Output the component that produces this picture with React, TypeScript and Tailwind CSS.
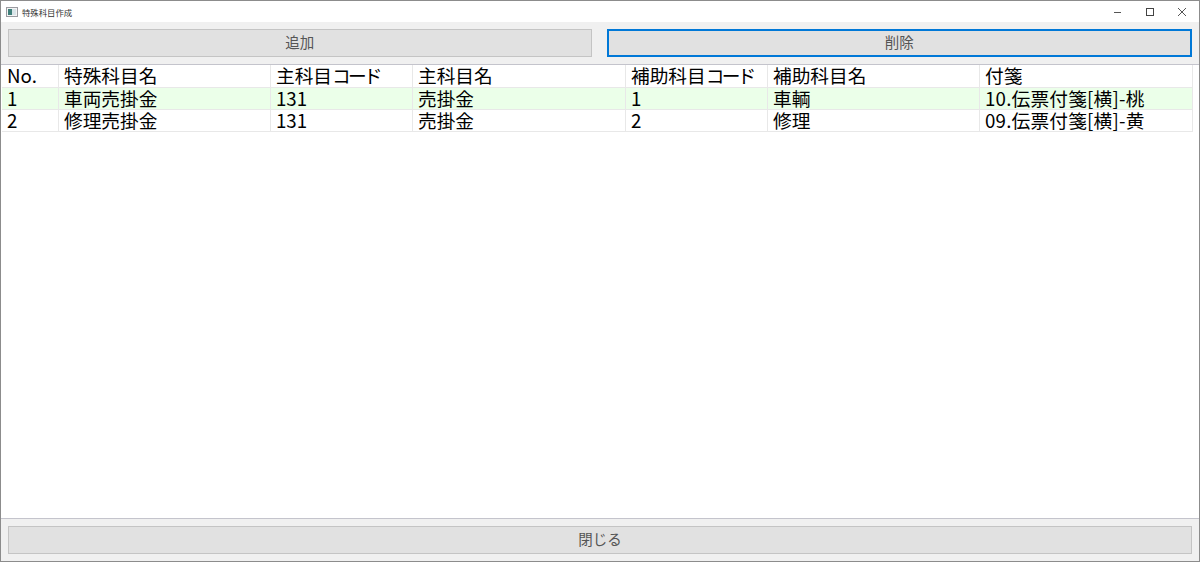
const font = "[font-family:'Noto_Sans_CJK_JP','Liberation_Sans',sans-serif]"

const columns = ["No.", "特殊科目名", "主科目コード", "主科目名", "補助科目コード", "補助科目名", "付箋"]

const rows = [
  { cells: ["1", "車両売掛金", "131", "売掛金", "1", "車輌", "10.伝票付箋[横]-桃"], bg: "bg-[#ebffe9]" },
  { cells: ["2", "修理売掛金", "131", "売掛金", "2", "修理", "09.伝票付箋[横]-黄"], bg: "bg-white" },
]

function Cell({ text, height }: { text: string; height: string }) {
  // the katakana in the reference font runs narrower than the kanji
  const kana = text.indexOf("コード")
  return (
    <div className={`${height} flex items-center border-r border-b border-[#e8e8e8] pl-[5px] pb-[2px] text-[18.7px] leading-[20px] text-black whitespace-nowrap`}>
      {kana >= 0 ? (
        <span>
          {text.slice(0, kana)}
          <span className="tracking-[-2.8px]">コード</span>
        </span>
      ) : (
        <span className={text.includes("付箋[") ? "tracking-[0.2px]" : ""}>{text}</span>
      )}
    </div>
  )
}

function Row({ cells, bg, height }: { cells: string[]; bg: string; height: string }) {
  return (
    <div className={`grid grid-cols-[57px_212px_142px_213px_142px_212px_213px] w-[1191px] ${bg}`}>
      {cells.map((c, i) => (
        <Cell key={i} text={c} height={height} />
      ))}
    </div>
  )
}

function ActionButton({ label, focused }: { label: string; focused?: boolean }) {
  return (
    <button
      className={`flex-1 h-[28px] flex items-center justify-center bg-[#e1e1e1] pb-[2px] text-[14.5px] leading-[20px] text-[#555555] ${
        focused ? "border-2 border-[#0078d7]" : "border border-[#c4c4c4]"
      }`}
    >
      {label}
    </button>
  )
}

export default function App() {
  return (
    <div className={`${font} w-[1200px] h-[562px] flex flex-col bg-white border border-[#8c8c8c]`}>
      <div className="h-[21px] flex items-center justify-between bg-white pl-[5px]">
        <div className="flex items-center gap-[4px]">
          <svg width="12" height="12" viewBox="0 0 12 12">
            <rect x="0.5" y="1.5" width="11" height="9" fill="#f4f4f4" stroke="#9a9aa0" />
            <rect x="2" y="3" width="4" height="6" fill="#3f7f7a" />
            <rect x="6" y="3" width="4" height="6" fill="#d8e4e8" />
          </svg>
          <span className="text-[8.4px] leading-[12px] text-[#333333]">特殊科目作成</span>
        </div>
        <div className="flex items-center">
          <div className="w-[36px] flex justify-center">
            <svg width="10" height="10" viewBox="0 0 10 10">
              <path d="M1 5.5h7" stroke="#555555" strokeWidth="1" />
            </svg>
          </div>
          <div className="w-[28px] flex justify-center">
            <svg width="10" height="10" viewBox="0 0 10 10">
              <rect x="1.5" y="1.5" width="7" height="7" fill="none" stroke="#444444" strokeWidth="1" />
            </svg>
          </div>
          <div className="w-[35px] flex justify-center">
            <svg width="10" height="10" viewBox="0 0 10 10">
              <path d="M1 1l8 8M9 1l-8 8" stroke="#555555" strokeWidth="1" />
            </svg>
          </div>
        </div>
      </div>

      <div className="h-[42px] flex items-center gap-[15px] bg-[#f0f0f0] px-[7px] pb-[1px]">
        <ActionButton label="追加" />
        <ActionButton label="削除" focused />
      </div>

      <div className="flex-1 bg-white border-t border-b border-[#c4c4cc] pl-[1px]">
        <Row cells={columns} bg="bg-white" height="h-[23px]" />
        {rows.map((r, i) => (
          <Row key={i} cells={r.cells} bg={r.bg} height="h-[22px]" />
        ))}
      </div>

      <div className="h-[42px] flex items-center bg-[#f0f0f0] px-[7px] pb-[1px]">
        <ActionButton label="閉じる" />
      </div>
    </div>
  )
}
